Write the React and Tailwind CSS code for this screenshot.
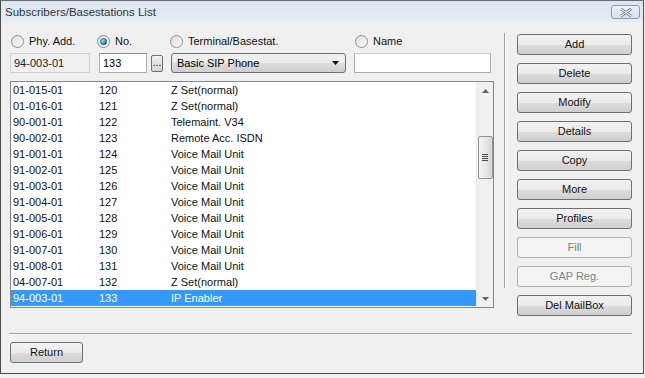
import { useState } from 'react'

const rows = [
  ['01-015-01', '120', 'Z Set(normal)'],
  ['01-016-01', '121', 'Z Set(normal)'],
  ['90-001-01', '122', 'Telemaint. V34'],
  ['90-002-01', '123', 'Remote Acc. ISDN'],
  ['91-001-01', '124', 'Voice Mail Unit'],
  ['91-002-01', '125', 'Voice Mail Unit'],
  ['91-003-01', '126', 'Voice Mail Unit'],
  ['91-004-01', '127', 'Voice Mail Unit'],
  ['91-005-01', '128', 'Voice Mail Unit'],
  ['91-006-01', '129', 'Voice Mail Unit'],
  ['91-007-01', '130', 'Voice Mail Unit'],
  ['91-008-01', '131', 'Voice Mail Unit'],
  ['04-007-01', '132', 'Z Set(normal)'],
  ['94-003-01', '133', 'IP Enabler'],
]

const buttons = [
  ['Add', true],
  ['Delete', true],
  ['Modify', true],
  ['Details', true],
  ['Copy', true],
  ['More', true],
  ['Profiles', true],
  ['Fill', false],
  ['GAP Reg.', false],
  ['Del MailBox', true],
]

function Radio({ checked, label, onClick }) {
  return (
    <label className="flex items-center gap-[5px] cursor-default" onClick={onClick}>
      <span className="w-[13px] h-[13px] rounded-full border border-[#8e8f8f] bg-gradient-to-br from-[#dcdcdc] to-[#fbfbfb] flex items-center justify-center">
        {checked && (
          <span className="w-[7px] h-[7px] rounded-full bg-[radial-gradient(circle_at_40%_40%,#a9dcf6,#1e6f9c_60%,#0f3f5e)]" />
        )}
      </span>
      <span className="text-[11px] leading-none text-[#111]">{label}</span>
    </label>
  )
}

function WinButton({ label, enabled = true, className = '' }) {
  return (
    <button
      className={`h-[21px] rounded-[3px] border text-[11px] leading-none ${
        enabled
          ? 'border-[#707070] text-[#111] bg-[linear-gradient(#f2f2f2_0%,#ebebeb_50%,#dddddd_51%,#cfcfcf_100%)]'
          : 'border-[#adb2b5] text-[#838383] bg-[#f4f4f4]'
      } ${className}`}
    >
      {label}
    </button>
  )
}

export default function App() {
  const [mode, setMode] = useState('no')

  return (
    <div className="w-[645px] h-[378px] bg-[#f0f0f0] font-['Liberation_Sans',Arial,sans-serif] overflow-hidden">
      <div className="w-[644px] h-[374px] border border-[#4d4d4d] border-t-[#6b6b6b] flex flex-col bg-[#f0f0f0]">
        {/* Title bar */}
        <div className="h-[21px] flex items-center justify-between pl-[4px] pr-[3px] bg-[linear-gradient(#dbe5f1,#e6edf6)]">
          <span className="text-[11.5px] text-[#333] leading-none pt-[2px]">Subscribers/Basestations List</span>
          <span className="w-[29px] h-[14px] mt-[1px] rounded-[3px] border border-[#8c9bb0] bg-[linear-gradient(#eef3fa,#d6e0ee)] flex items-center justify-center">
            <svg width="12" height="9" viewBox="0 0 12 9">
              <path d="M1 1 L11 8 M11 1 L1 8" stroke="#5a6472" strokeWidth="2.6" />
              <path d="M1 1 L11 8 M11 1 L1 8" stroke="#ffffff" strokeWidth="1.1" />
            </svg>
          </span>
        </div>

        {/* Body */}
        <div className="flex pt-[12px]">
          {/* Left */}
          <div className="ml-[8px] w-[485px] flex flex-col">
            <div className="flex h-[14px] items-center">
              <div className="w-[88px] pl-[2px]">
                <Radio checked={mode === 'phy'} label="Phy. Add." onClick={() => setMode('phy')} />
              </div>
              <div className="w-[73px]">
                <Radio checked={mode === 'no'} label="No." onClick={() => setMode('no')} />
              </div>
              <div className="w-[185px]">
                <Radio checked={mode === 'term'} label="Terminal/Basestat." onClick={() => setMode('term')} />
              </div>
              <Radio checked={mode === 'name'} label="Name" onClick={() => setMode('name')} />
            </div>

            <div className="flex items-center mt-[5px] h-[20px]">
              <div className="ml-[1px] w-[80px] h-[20px] border border-[#d0d0d0] bg-[#f0f0f0] text-[11px] leading-[18px] pl-[3px] text-[#222]">
                94-003-01
              </div>
              <div className="ml-[9px] w-[48px] h-[20px] border border-[#abadb3] border-t-[#8f8f8f] bg-white text-[11px] leading-[18px] pl-[3px]">
                133
              </div>
              <button className="ml-[4px] w-[12px] h-[17px] rounded-[2px] border border-[#707070] bg-[linear-gradient(#f2f2f2,#d5d5d5)] text-[10px] leading-[10px] flex items-end justify-center pb-[3px]">
                ...
              </button>
              <div className="ml-[8px] w-[175px] h-[20px] rounded-[3px] border border-[#707070] bg-[linear-gradient(#f2f2f2_0%,#ebebeb_50%,#dddddd_51%,#cfcfcf_100%)] flex items-center justify-between pl-[5px] pr-[6px]">
                <span className="text-[11px] leading-none">Basic SIP Phone</span>
                <svg width="7" height="4" viewBox="0 0 7 4">
                  <path d="M0 0 H7 L3.5 4 Z" fill="#000" />
                </svg>
              </div>
              <div className="ml-[8px] w-[137px] h-[20px] border border-[#abadb3] border-t-[#c9c9c9] bg-white" />
            </div>

            {/* List */}
            <div className="mt-[8px] ml-[1px] w-[484px] h-[227px] border border-[#828790] bg-white flex">
              <div className="flex-1 flex flex-col">
                {rows.map((r, i) => {
                  const sel = i === rows.length - 1
                  return (
                    <div
                      key={r[0]}
                      className={`h-[16px] flex items-center text-[11px] leading-none ${
                        sel ? 'bg-[#3399ff] text-white' : 'text-[#111]'
                      }`}
                    >
                      <span className="w-[88px] pl-[2px]">{r[0]}</span>
                      <span className="w-[72px]">{r[1]}</span>
                      <span>{r[2]}</span>
                    </div>
                  )
                })}
              </div>
              {/* Scrollbar */}
              <div className="w-[17px] h-full bg-[#f0f0f0] border-l border-[#ececec] flex flex-col items-center">
                <div className="h-[17px] flex items-center justify-center">
                  <svg width="7" height="4" viewBox="0 0 7 4">
                    <path d="M0 4 H7 L3.5 0 Z" fill="#606060" />
                  </svg>
                </div>
                <div className="mt-[37px] w-[15px] h-[43px] rounded-[2px] border border-[#959595] bg-[linear-gradient(90deg,#f3f3f3,#e8e8e8_50%,#d6d6d6)] flex flex-col items-center justify-center gap-[1px]">
                  <span className="w-[6px] h-[1px] bg-[#4d4d4d]" />
                  <span className="w-[6px] h-[1px] bg-[#4d4d4d]" />
                  <span className="w-[6px] h-[1px] bg-[#4d4d4d]" />
                  <span className="w-[6px] h-[1px] bg-[#4d4d4d]" />
                </div>
                <div className="flex-1" />
                <div className="h-[17px] flex items-center justify-center">
                  <svg width="7" height="4" viewBox="0 0 7 4">
                    <path d="M0 0 H7 L3.5 4 Z" fill="#606060" />
                  </svg>
                </div>
              </div>
            </div>
          </div>

          {/* Vertical separator */}
          <div className="ml-[10px] mt-[-1px] h-[255px] w-[2px] border-l border-[#a0a0a0] border-r border-r-white" />

          {/* Buttons */}
          <div className="ml-[11px] flex flex-col gap-[8px]">
            {buttons.map(([label, en]) => (
              <WinButton key={label} label={label} enabled={en} className="w-[115px]" />
            ))}
          </div>
        </div>

        {/* Horizontal separator */}
        <div className="mt-[17px] ml-[8px] w-[623px] h-[2px] border-t border-[#a0a0a0] border-b border-b-white" />

        <div className="mt-[7px] ml-[9px] flex">
          <WinButton label="Return" className="w-[73px]" />
        </div>
      </div>
    </div>
  )
}
